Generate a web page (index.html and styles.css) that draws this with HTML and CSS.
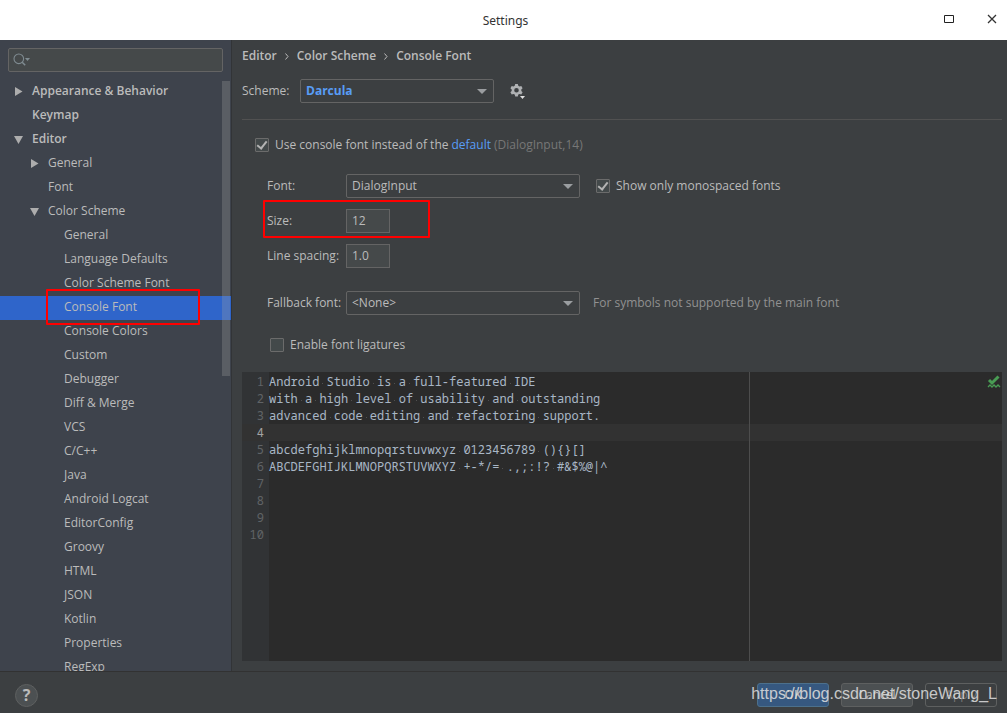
FILE: index.html
```html
<!DOCTYPE html>
<html lang="en">
<head>
<meta charset="utf-8">
<meta name="viewport" content="width=device-width, initial-scale=1">
<title>Settings</title>
<link rel="stylesheet" href="styles.css">
</head>
<body>
<header class="titlebar">
  <h1 class="title">Settings</h1>
  <div class="window-buttons">
    <button class="window-button" aria-label="Maximize"><svg width="12" height="12" viewBox="0 0 12 12"><path d="M1.500 2.500h9v7h-9z" fill="none" stroke="#222"/></svg></button>
    <button class="window-button" aria-label="Close"><svg width="12" height="12" viewBox="0 0 12 12"><path d="M2 2l8 8M10 2l-8 8" fill="none" stroke="#333" stroke-width="1.3"/></svg></button>
  </div>
</header>
<div class="body">
  <aside class="sidebar">
    <div class="search">
      <svg class="search-icon" width="18" height="14" viewBox="0 0 18 14"><g fill="none" stroke="#7f8b91" stroke-width="1.1"><circle cx="5.8" cy="5.8" r="4.8"/><path d="M9.2 9.2l3 3" stroke-width="1.5"/></g><path d="M12 5h5l-2.500 3z" fill="#7f8b91"/></svg>
      <input class="search-input" type="text" aria-label="Search settings">
    </div>
    <nav class="tree" aria-label="Settings">
      <a class="node top" href="#"><svg class="arrow" viewBox="0 0 9 9"><path d="M1 0l7.500 4.500L1 9z"/></svg>Appearance &amp; Behavior</a>
      <a class="node top leaf" href="#">Keymap</a>
      <a class="node top" href="#"><svg class="arrow" viewBox="0 0 9 9"><path d="M0 1h9L4.500 9z"/></svg>Editor</a>
      <a class="node second" href="#"><svg class="arrow" viewBox="0 0 9 9"><path d="M1 0l7.500 4.500L1 9z"/></svg>General</a>
      <a class="node second leaf" href="#">Font</a>
      <a class="node second" href="#"><svg class="arrow" viewBox="0 0 9 9"><path d="M0 1h9L4.500 9z"/></svg>Color Scheme</a>
      <a class="node third" href="#">General</a>
      <a class="node third" href="#">Language Defaults</a>
      <a class="node third" href="#">Color Scheme Font</a>
      <a class="node third selected" href="#" aria-current="page">Console Font<span class="mark mark-node"></span></a>
      <a class="node third" href="#">Console Colors</a>
      <a class="node third" href="#">Custom</a>
      <a class="node third" href="#">Debugger</a>
      <a class="node third" href="#">Diff &amp; Merge</a>
      <a class="node third" href="#">VCS</a>
      <a class="node third" href="#">C/C++</a>
      <a class="node third" href="#">Java</a>
      <a class="node third" href="#">Android Logcat</a>
      <a class="node third" href="#">EditorConfig</a>
      <a class="node third" href="#">Groovy</a>
      <a class="node third" href="#">HTML</a>
      <a class="node third" href="#">JSON</a>
      <a class="node third" href="#">Kotlin</a>
      <a class="node third" href="#">Properties</a>
      <a class="node third" href="#">RegExp</a>
      <span class="scroll-thumb"></span>
    </nav>
  </aside>
  <main class="main">
    <div class="crumbs">
      <span>Editor</span>
      <svg class="crumb-arrow" width="4" height="7" viewBox="0 0 4 7"><path d="M.5 .5l2.500 3l-2.500 3"/></svg>
      <span>Color Scheme</span>
      <svg class="crumb-arrow" width="4" height="7" viewBox="0 0 4 7"><path d="M.5 .5l2.500 3l-2.500 3"/></svg>
      <span>Console Font</span>
    </div>
    <div class="scheme">
      <label class="scheme-label" for="scheme">Scheme:</label>
      <span class="combo combo-scheme"><select id="scheme"><option>Darcula</option></select></span>
      <button class="gear" aria-label="Scheme actions"><svg width="16" height="16" viewBox="0 0 16 16"><g fill="#afb1b3"><path fill-rule="evenodd" d="M5.200 1h2.600l.5 1.800 1.200.7 1.800-.5 1.300 2.200-1.300 1.300v1.400l1.300 1.300-1.300 2.200-1.800-.5-1.200.7-.5 1.800H5.200l-.5-1.800-1.200-.7-1.800.5L.4 9.200l1.300-1.300V6.500L.4 5.200 1.700 3l1.800.5 1.200-.7zM6.500 4.900a2.300 2.300 0 1 0 0 4.600 2.300 2.300 0 0 0 0-4.600z"/></g><path d="M9 12h7v1l-3.500 3.500L9 13z" fill="#3c3f41"/><path d="M10 13h5l-2.500 3z" fill="#e0e0e0"/></svg></button>
    </div>
    <form class="form">
      <div class="row use-row">
        <input class="check" type="checkbox" id="use" checked>
        <label for="use">Use console font instead of the</label>
        <a class="link" href="#">default</a>
        <span class="muted">(DialogInput,14)</span>
      </div>
      <div class="fields">
        <div class="row">
          <label class="field-label" for="font">Font:</label>
          <span class="combo"><select id="font"><option>DialogInput</option></select></span>
          <span class="row side-check"><input class="check" type="checkbox" id="mono" checked><label for="mono">Show only monospaced fonts</label></span>
        </div>
        <div class="row">
          <label class="field-label" for="size">Size:</label>
          <input class="number" type="text" id="size" value="12">
          <span class="mark mark-size"></span>
        </div>
        <div class="row">
          <label class="field-label" for="spacing">Line spacing:</label>
          <input class="number" type="text" id="spacing" value="1.0">
        </div>
        <div class="row fallback">
          <label class="field-label" for="fallback">Fallback font:</label>
          <span class="combo"><select id="fallback"><option>&lt;None&gt;</option></select></span>
          <span class="hint">For symbols not supported by the main font</span>
        </div>
        <div class="row ligatures">
          <input class="check" type="checkbox" id="lig"><label for="lig">Enable font ligatures</label>
        </div>
      </div>
    </form>
    <section class="editor" aria-label="Font preview">
      <ol class="lines">
        <li class="line">Android<i> </i>Studio<i> </i>is<i> </i>a<i> </i>full-featured<i> </i>IDE</li>
        <li class="line">with<i> </i>a<i> </i>high<i> </i>level<i> </i>of<i> </i>usability<i> </i>and<i> </i>outstanding</li>
        <li class="line">advanced<i> </i>code<i> </i>editing<i> </i>and<i> </i>refactoring<i> </i>support.</li>
        <li class="line current"></li>
        <li class="line">abcdefghijklmnopqrstuvwxyz<i> </i>0123456789<i> </i>(){}[]</li>
        <li class="line">ABCDEFGHIJKLMNOPQRSTUVWXYZ<i> </i>+-*/=<i> </i>.,;:!?<i> </i>#&amp;$%@|^</li>
        <li class="line"></li>
        <li class="line"></li>
        <li class="line"></li>
        <li class="line"></li>
      </ol>
      <span class="margin-line"></span>
      <svg class="status" width="14" height="14" viewBox="0 0 14 14"><path d="M2 5l3 3 6.500-6.500" fill="none" stroke="#499c54" stroke-width="3"/><path d="M1 12l2-2 2 2 2-2 2 2 2-2 2 2" fill="none" stroke="#499c54" stroke-width="1.3"/></svg>
    </section>
  </main>
</div>
<footer class="footer">
  <button class="help" aria-label="Help">?</button>
  <div class="actions">
    <button class="button primary">OK</button>
    <button class="button">Cancel</button>
    <button class="button disabled" disabled>Apply</button>
  </div>
  <span class="watermark">https://blog.csdn.net/stoneWang_L</span>
</footer>
</body>
</html>
```
FILE: styles.css
```css
* { box-sizing: border-box; }
body {
  margin: 0;
  height: 100vh;
  display: flex;
  flex-direction: column;
  overflow: hidden;
  background: #3c3f41;
  color: #bbbbbb;
  font: 12px/18px "Open Sans", "Noto Sans", sans-serif;
}
button, input, select { font: inherit; color: inherit; margin: 0; }
a { color: inherit; text-decoration: none; }
svg { display: block; flex: none; }

.titlebar {
  position: relative;
  flex: none;
  height: 40px;
  display: flex;
  align-items: center;
  justify-content: center;
  background: #ffffff;
  color: #333333;
}
.title { margin: 0; padding: 2px 0 0 4px; font: 400 12px/18px "Noto Sans", sans-serif; }
.window-buttons { position: absolute; right: 9px; top: 13px; display: flex; gap: 31px; }
.window-button { padding: 0; border: 0; background: none; }

.body { flex: 1; min-height: 0; display: flex; }
.sidebar {
  flex: none;
  width: 232px;
  display: flex;
  flex-direction: column;
  padding-top: 8px;
  background: #3e434c;
  border-right: 1px solid #323437;
}
.search {
  flex: none;
  height: 24px;
  margin: 0 8px 8px;
  display: flex;
  align-items: center;
  padding-left: 4px;
  background: #45494a;
  border: 1px solid #646464;
  border-radius: 2px;
}
.search-input { flex: 1; min-width: 0; border: 0; background: none; outline: 0; }
.tree { position: relative; flex: 1; min-height: 0; overflow: hidden; }
.node { position: relative; display: flex; align-items: center; height: 24px; padding-bottom: 2px; white-space: nowrap; }
.top { padding-left: 14px; font-weight: 600; }
.top.leaf { padding-left: 32px; }
.second { padding-left: 30px; }
.second.leaf { padding-left: 48px; }
.third { padding-left: 64px; }
.arrow { width: 9px; height: 9px; margin-right: 9px; fill: #adadad; }
.selected { background: #2f65ca; z-index: 1; }
.scroll-thumb { position: absolute; z-index: 2; right: 1px; top: 1px; width: 8px; height: 295px; background: rgba(166, 166, 166, 0.28); }
.mark { position: absolute; border: 2px solid #ff0000; border-radius: 1px; pointer-events: none; }
.mark-node { left: 46px; top: -7px; width: 154px; height: 36px; }
.mark-size { left: -4px; top: -9px; width: 167px; height: 38px; }

.main { flex: 1; min-width: 0; display: flex; flex-direction: column; padding: 6px 5px 10px 10px; }
.crumbs { display: flex; align-items: center; gap: 8px; height: 20px; font-weight: 600; }
.crumb-arrow { fill: none; stroke: #bbbbbb; }
.scheme { display: flex; align-items: center; padding: 13px 0 16px; border-bottom: 1px solid #515151; }
.scheme-label { width: 58px; }
.combo { position: relative; width: 234px; height: 24px; }
.combo::after {
  content: "";
  position: absolute;
  right: 7px;
  top: 10px;
  border: 5px solid transparent;
  border-top-color: #9a9da0;
  border-bottom: 0;
  pointer-events: none;
}
.combo select {
  appearance: none;
  width: 100%;
  height: 100%;
  padding: 0 20px 0 5px;
  background: #3c3f41;
  border: 1px solid #646464;
  border-radius: 2px;
}
.combo-scheme { width: 194px; }
.combo-scheme select { color: #589df6; font-weight: 700; }
.gear { margin-left: 16px; padding: 0; border: 0; background: none; }

.form { padding: 15px 0 17px 13px; }
.row { position: relative; display: flex; align-items: center; white-space: nowrap; }
.use-row { height: 20px; gap: 3px; }
.check {
  appearance: none;
  width: 14px;
  height: 14px;
  margin-right: 6px;
  border: 1px solid #6b6b6b;
  border-radius: 1px;
  background: #43494a;
}
.use-row .check { margin-right: 3px; }
.check:checked::after {
  content: "";
  box-sizing: border-box;
  display: block;
  width: 6px;
  height: 10px;
  margin: 0 0 0 3px;
  border: solid #b4b4b4;
  border-width: 0 2px 2px 0;
  transform: rotate(38deg);
}
.link { color: #589df6; }
.muted { color: #777777; }
.hint { margin-left: 13px; color: #919191; }
.fields { display: flex; flex-direction: column; gap: 11px; padding: 19px 0 0 12px; }
.field-label { width: 79px; }
.side-check { margin-left: 16px; }
.number { width: 44px; height: 24px; padding: 0 5px 1px; background: #45494a; border: 1px solid #646464; outline: 0; }
.fallback { margin-top: 12px; }
.ligatures { height: 20px; margin-top: 9px; padding-left: 3px; }

.editor {
  position: relative;
  flex: 1;
  min-height: 0;
  overflow: hidden;
  padding-top: 1px;
  background: linear-gradient(90deg, #313335 27px, #2b2b2b 27px);
  font: 12px/17px "Noto Sans Mono", "Droid Sans Mono", "DejaVu Sans Mono", monospace;
}
.lines { margin: 0; padding: 0; list-style: none; counter-reset: line; }
.line { display: flex; height: 17px; color: #a9b7c6; white-space: pre; counter-increment: line; }
.line::before { content: counter(line); flex: none; width: 22px; margin-right: 5px; text-align: right; color: #606366; }
.line i { background: linear-gradient(#505050, #505050) 3px 10px / 1px 1px no-repeat; }
.current { background: #323232; }
.current::before { color: #a4a3a3; }
.margin-line { position: absolute; left: 507px; top: 0; bottom: 0; width: 1px; background: #4d4d4d; }
.status { position: absolute; right: 1px; top: 3px; }

.footer {
  position: relative;
  flex: none;
  height: 42px;
  display: flex;
  align-items: center;
  justify-content: space-between;
  padding: 5px 10px 0 15px;
  border-top: 1px solid #323232;
}
.help {
  width: 23px;
  height: 23px;
  padding: 0;
  border: 1px solid #5e6060;
  border-radius: 50%;
  background: #4c5052;
  font-size: 16px;
  font-weight: 700;
  line-height: 20px;
}
.actions { display: flex; gap: 12px; }
.button { width: 72px; height: 24px; padding: 0; border: 1px solid #5e6060; border-radius: 3px; background: #4c5052; }
.primary { background: #365880; border-color: #4c708c; font-weight: 600; }
.disabled { background: none; color: #777777; }
.watermark {
  position: absolute;
  right: 10px;
  top: 12px;
  color: rgba(225, 225, 225, 0.85);
  font: 16px/20px "Liberation Sans", Arial, sans-serif;
}
```
